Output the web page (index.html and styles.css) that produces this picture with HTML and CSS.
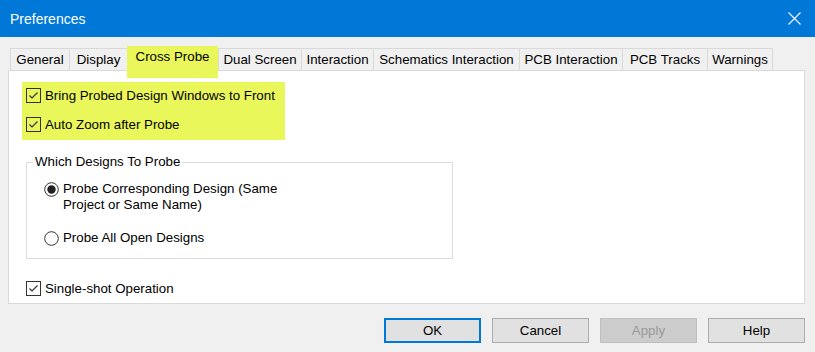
FILE: index.html
```html
<!DOCTYPE html>
<html>
<head>
<meta charset="utf-8">
<link rel="stylesheet" href="styles.css">
</head>
<body>
<div class="window">
  <div class="titlebar">
    <span class="title">Preferences</span>
    <svg class="close" width="13" height="13" viewBox="0 0 13 13"><path d="M0.5 0.5L12.5 12.5M12.5 0.5L0.5 12.5" stroke="#fff" stroke-width="1.1" fill="none"/></svg>
  </div>
  <div class="content">
    <div class="tabs">
      <div class="tab t-general">General</div>
      <div class="tab t-display">Display</div>
      <div class="tab t-cross selected">Cross Probe</div>
      <div class="tab t-dual">Dual Screen</div>
      <div class="tab t-inter">Interaction</div>
      <div class="tab t-sch">Schematics Interaction</div>
      <div class="tab t-pcb">PCB Interaction</div>
      <div class="tab t-tracks">PCB Tracks</div>
      <div class="tab t-warn last">Warnings</div>
    </div>
    <div class="panel">
      <div class="hl">
        <div class="check">
          <svg class="box" width="15" height="15" viewBox="0 0 15 15"><rect x="0.5" y="0.5" width="14" height="14" fill="none" stroke="#333"/><path d="M3.5 7.5L6 10L11.5 4.5" stroke="#333" stroke-width="1.2" fill="none"/></svg>
          <span>Bring Probed Design Windows to Front</span>
        </div>
        <div class="check">
          <svg class="box" width="15" height="15" viewBox="0 0 15 15"><rect x="0.5" y="0.5" width="14" height="14" fill="none" stroke="#333"/><path d="M3.5 7.5L6 10L11.5 4.5" stroke="#333" stroke-width="1.2" fill="none"/></svg>
          <span>Auto Zoom after Probe</span>
        </div>
      </div>
      <fieldset class="group">
        <legend>Which Designs To Probe</legend>
        <div class="options">
          <div class="radio first">
            <svg class="dot" width="15" height="15" viewBox="0 0 15 15"><circle cx="7.5" cy="7.5" r="6.8" fill="#fff" stroke="#333"/><circle cx="7.5" cy="7.5" r="4.2" fill="#222"/></svg>
            <span>Probe Corresponding Design (Same<br>Project or Same Name)</span>
          </div>
          <div class="radio">
            <svg class="dot" width="15" height="15" viewBox="0 0 15 15"><circle cx="7.5" cy="7.5" r="6.8" fill="#fff" stroke="#333"/></svg>
            <span>Probe All Open Designs</span>
          </div>
        </div>
      </fieldset>
      <div class="check single">
        <svg class="box" width="15" height="15" viewBox="0 0 15 15"><rect x="0.5" y="0.5" width="14" height="14" fill="none" stroke="#333"/><path d="M3.5 7.5L6 10L11.5 4.5" stroke="#333" stroke-width="1.2" fill="none"/></svg>
        <span>Single-shot Operation</span>
      </div>
    </div>
    <div class="buttons">
      <div class="btn default">OK</div>
      <div class="btn">Cancel</div>
      <div class="btn disabled">Apply</div>
      <div class="btn">Help</div>
    </div>
  </div>
</div>
</body>
</html>
```
FILE: styles.css
```css
* { box-sizing: border-box; }
html, body { margin: 0; padding: 0; }
body {
  font-family: "Liberation Sans", Arial, sans-serif;
  font-size: 13.3px;
  color: #000;
  background: #f0f0f0;
}
.window {
  width: 815px;
  height: 352px;
  background: #f0f0f0;
  overflow: hidden;
}
.titlebar {
  height: 37px;
  background: #0078d7;
  display: flex;
  align-items: center;
  justify-content: space-between;
  padding: 0 14px 0 10px;
}
.title {
  color: #fff;
  font-size: 14px;
  padding-top: 1px;
}
.close { display: block; }
.content { padding-top: 9px; }
.tabs {
  display: flex;
  align-items: flex-end;
  margin-left: 10px;
}
.tab {
  height: 22px;
  line-height: 21px;
  text-align: center;
  border: 1px solid #d9d9d9;
  border-right: none;
  border-bottom: none;
  background: #f0f0f0;
  white-space: nowrap;
}
.tab.last { border-right: 1px solid #d9d9d9; }
.tab.selected {
  position: relative;
  z-index: 1;
  height: 32px;
  margin-bottom: -8px;
  line-height: 22px;
  background: #eaf75a;
  border: none;
  padding-bottom: 8px;
}
.t-general { width: 59px; }
.t-display { width: 58px; }
.t-cross { width: 91px; }
.t-dual { width: 83px; }
.t-inter { width: 72px; }
.t-sch { width: 146px; }
.t-pcb { width: 103px; }
.t-tracks { width: 85px; }
.t-warn { width: 66px; }

.panel {
  margin-left: 8px;
  width: 797px;
  height: 234px;
  background: #fff;
  border: 1px solid #d9d9d9;
}
.hl {
  margin: 11px 0 0 13px;
  width: 263px;
  height: 58px;
  background: #eaf75a;
  padding: 6px 0 0 4px;
}
.check {
  display: flex;
  align-items: center;
  height: 15px;
  gap: 4px;
  white-space: nowrap;
}
.hl .check { margin-bottom: 14px; }
.box, .dot { display: block; flex: none; }
.check span { line-height: 16px; }
.group {
  margin: 14px 0 0 17px;
  width: 427px;
  border: 1px solid #dcdcdc;
  padding: 0;
  min-width: 0;
}
.group legend {
  margin-left: 6px;
  padding: 0 2px;
  line-height: 16px;
}
.options { padding: 11px 0 12px 17px; }
.radio {
  display: flex;
  align-items: flex-start;
  gap: 4px;
  line-height: 16px;
}
.radio .dot { margin-top: 1px; }
.radio.first { margin-bottom: 17px; }
.check.single { margin: 22px 0 0 17px; }

.buttons {
  display: flex;
  justify-content: flex-end;
  gap: 11px;
  padding-right: 10px;
  margin-top: 14px;
}
.btn {
  width: 97px;
  height: 25px;
  border: 1px solid #adadad;
  background: #e1e1e1;
  display: flex;
  align-items: center;
  justify-content: center;
}
.btn.default { border: 2px solid #0078d7; }
.btn.disabled {
  background: #cccccc;
  border-color: #bfbfbf;
  color: #9a9a9a;
}
```
